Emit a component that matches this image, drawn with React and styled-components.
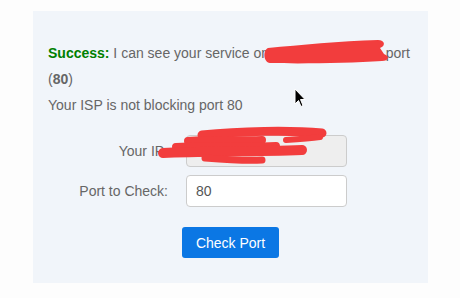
import React from "react";
import styled, { createGlobalStyle } from "styled-components";

const Global = createGlobalStyle`
  html, body { margin: 0; padding: 0; background: #fdfdfd; }
  body { font-family: "Liberation Sans", Arial, sans-serif; }
`;

const Page = styled.div`
  width: 460px;
  height: 298px;
  padding: 11px 0 0 33px;
  box-sizing: border-box;
`;

const Panel = styled.div`
  position: relative;
  width: 395px;
  box-sizing: border-box;
  background: #f1f5fa;
  padding: 29px 15px 25px 15px;
  color: #666;
  font-size: 14px;
`;

const Text = styled.p`
  margin: 0;
  line-height: 26px;
`;

const Success = styled.strong`
  color: #008000;
`;

const Hidden = styled.span`
  display: inline-block;
  width: 109px;
  height: 1em;
  vertical-align: baseline;
`;

const Scribble = styled.svg`
  position: absolute;
  overflow: visible;
  pointer-events: none;
  left: ${(p) => p.$x}px;
  top: ${(p) => p.$y}px;
`;

const Form = styled.div`
  display: flex;
  flex-direction: column;
  gap: 8px;
  margin-top: 17px;
`;

const Row = styled.div`
  display: flex;
  align-items: center;
  gap: 18px;
`;

const Label = styled.label`
  width: 120px;
  text-align: right;
  font-size: 14px;
  color: #666;
`;

const Input = styled.input`
  width: 161px;
  height: 32px;
  box-sizing: border-box;
  border: 1px solid #ccc;
  border-radius: 4px;
  padding: 0 9px;
  font-family: "Liberation Sans", Arial, sans-serif;
  font-size: 14px;
  color: #555;
  background: ${(p) => (p.disabled ? "#eeeeee" : "#fff")};
  outline: none;
`;

const ButtonRow = styled.div`
  display: flex;
  justify-content: center;
  margin-top: 12px;
`;

const Button = styled.button`
  height: 31px;
  padding: 0 14px;
  border: none;
  border-radius: 3px;
  background: #0b77e4;
  color: #fff;
  font-family: "Liberation Sans", Arial, sans-serif;
  font-size: 14px;
  cursor: pointer;
`;

const Cursor = styled.svg`
  position: absolute;
  left: 261px;
  top: 77px;
`;

export default function App() {
  return (
    <>
      <Global />
      <Page>
        <Panel>
          <Text>
            <Success>Success:</Success> I can see your service on{" "}
            <Hidden />{" "}
            port (<strong>80</strong>)
          </Text>
          <Text>Your ISP is not blocking port 80</Text>
          <Form>
            <Row>
              <Label>Your IP:</Label>
              <Input disabled value="" readOnly />
            </Row>
            <Row>
              <Label>Port to Check:</Label>
              <Input defaultValue="80" />
            </Row>
            <ButtonRow>
              <Button>Check Port</Button>
            </ButtonRow>
          </Form>
          <Scribble $x={235} $y={29} width="122" height="25" viewBox="268 40 122 25">
            <path
              d="M268,48 C300,45 340,41 378,40 C385,40 386,46 380,48 L384,54 C390,56 389,61 382,61 C350,63 300,64 270,63 C263,62 263,50 268,48 Z"
              fill="#f23d3d"
            />
          </Scribble>
          <Scribble $x={125} $y={117} width="172" height="48" viewBox="158 128 172 48">
            <g fill="none" stroke="#f23d3d" strokeLinecap="round">
              <path d="M202,135 C240,131 290,130 322,133" strokeWidth="9" />
              <path d="M188,141 C225,139 245,141 262,140" strokeWidth="8" />
              <path d="M286,140 C300,139 312,138 320,137" strokeWidth="6" />
              <path d="M176,147 C210,145 240,148 276,146" strokeWidth="8" />
              <path d="M163,153 C200,151 250,152 302,150" strokeWidth="10" />
              <path d="M205,158 C230,160 250,161 262,160" strokeWidth="7" />
            </g>
          </Scribble>
          <Cursor width="12" height="20" viewBox="0 0 12 20">
            <path d="M1,1 L1,16 L4.5,12.5 L7,18.5 L9,17.5 L6.5,11.5 L11,11.5 Z" fill="#000" stroke="#fff" strokeWidth="1" />
          </Cursor>
        </Panel>
      </Page>
    </>
  );
}
